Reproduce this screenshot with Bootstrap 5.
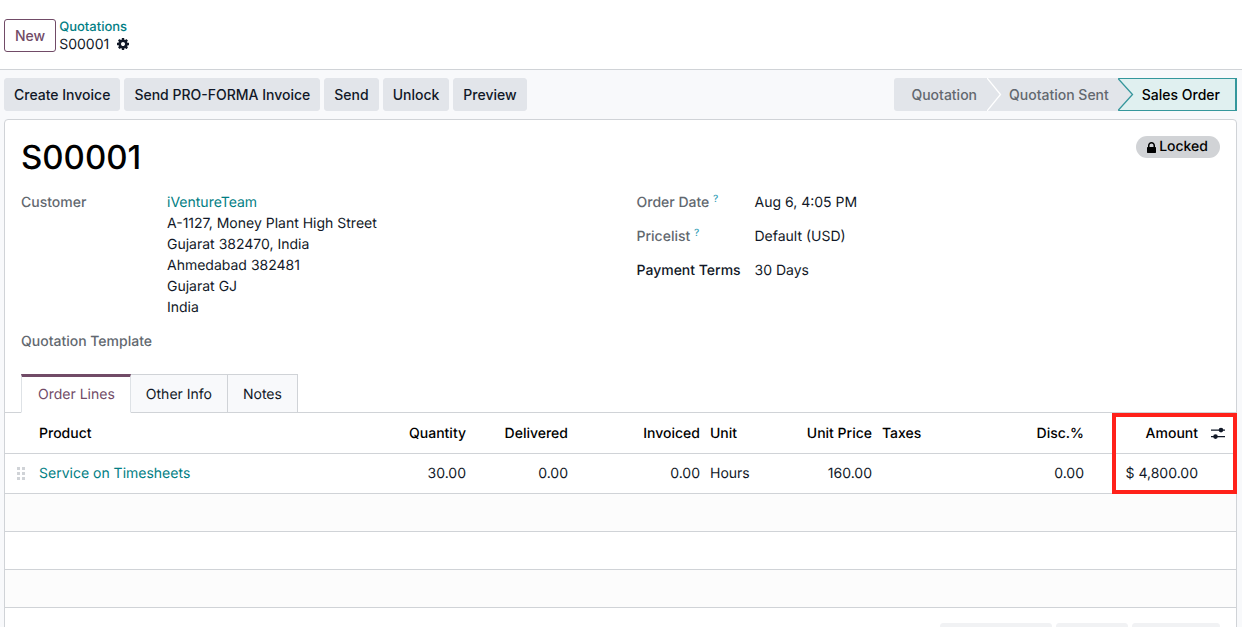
<!DOCTYPE html>
<html lang="en">
<head>
<meta charset="utf-8">
<meta name="viewport" content="width=device-width, initial-scale=1">
<title>S00001 - Quotations</title>
<link href="https://cdn.jsdelivr.net/npm/bootstrap@5.3.0/dist/css/bootstrap.min.css" rel="stylesheet">
<style>
  :root { --ink: #111827; --teal: #017e84; --plum: #714b67; --line: #d0d3d7; --soft: #f8f9fb; --grey: #e2e5ea; --label: #62686f; }
  body { font-family: Inter, "Liberation Sans", sans-serif; font-size: 14px; line-height: 21px; color: var(--ink); background: var(--soft); height: 100vh; overflow: hidden; text-rendering: geometricPrecision; }
  a { color: var(--teal); text-decoration: none; }
  .control-panel { min-height: 70px; padding: 2px 4px 0; gap: 3px; border-bottom: 1px solid var(--line); }
  .crumbs { line-height: 17px; font-size: 14px; }
  .crumbs a { font-size: 13px; font-weight: 500; }
  .btn { --bs-btn-font-size: 14px; --bs-btn-line-height: 21px; --bs-btn-padding-x: 9px; --bs-btn-padding-y: 5px; --bs-btn-border-radius: 3px; --bs-btn-font-weight: 500; }
  .btn-new { --bs-btn-padding-x: 10px; --bs-btn-color: var(--plum); --bs-btn-border-color: var(--plum); --bs-btn-bg: #fff; }
  .btn-grey { --bs-btn-color: var(--ink); --bs-btn-bg: var(--grey); --bs-btn-border-color: var(--grey); }
  .btn-fade { --bs-btn-disabled-bg: #f1f2f4; --bs-btn-disabled-border-color: #f1f2f4; --bs-btn-disabled-opacity: 1; height: 33px; }
  .form-edge { padding-left: 4px; padding-right: 5px; }
  .stage { position: relative; height: 33px; border: 0; background: var(--grey); color: var(--label); font-weight: 500; padding: 0 9px 0 22px; }
  .stage:first-child { padding: 0 10px 0 17px; border-radius: 3px 0 0 3px; }
  .stage-on { background: #e0f0f0; color: #000; padding: 0 15px 0 24px; border: solid #35979c; border-width: 1px 2px 1px 0; }
  .stage svg { position: absolute; left: 0; top: 0; }
  .stage-on svg { top: -1px; }
  .sheet { background: #fff; border: 1px solid var(--line); border-radius: 4px 4px 0 0; }
  .sheet h1 { font-size: 33px; line-height: 42px; font-weight: 500; color: #000; }
  .sheet-head { padding: 16px 16px 14px; }
  .state-pill { background: #d1d3d6; color: #000; font-size: 14px; line-height: 22px; font-weight: 500; padding: 0 12px 0 11px; gap: 3px; }
  .field-label { color: var(--label); font-weight: 500; flex: none; }
  .field-label.required { color: var(--ink); }
  .left-fields { display: grid; row-gap: 13px; }
  .left-fields .field-label { width: 146px; }
  .right-fields .field-label { width: 118px; }
  .right-fields { display: grid; row-gap: 13px; align-content: start; }
  .help { color: #2f9db5; font-size: 10px; line-height: 0; vertical-align: 5px; }
  .nav-tabs { --bs-nav-tabs-border-color: var(--line); --bs-nav-tabs-border-radius: 0; padding-left: 16px; margin-top: 22px; }
  .nav-tabs .nav-link { padding: 9px 15px 7px; line-height: 21px; font-size: 14px; color: var(--ink); background: var(--soft); border: 1px solid var(--line); }
  .nav-tabs .nav-item + .nav-item .nav-link { border-left: 0; }
  .nav-tabs .nav-link.active { color: var(--plum); background: #fff; border-top: 3px solid var(--plum); border-bottom-color: #fff; padding: 7px 15px 7px 16px; }
  .lines { table-layout: fixed; color: var(--ink); margin: 0; border-collapse: separate; border-spacing: 0; }
  .lines > :not(caption) > * > * { padding: 0 5px; border-bottom: 1px solid var(--line); background: transparent; white-space: nowrap; vertical-align: middle; }
  .lines th { height: 41px; color: #000; font-weight: 500; }
  .lines td { height: 40px; }
  .lines tr.blank td { height: 38px; }
  .lines tr.blank:nth-child(even) { background: #fcfcfc; }
  .highlight { position: absolute; top: 0; right: -1px; width: 125px; height: 81px; border: 4px solid #ff211a; pointer-events: none; }
  .totals { padding: 15px 16px; }
  .c-handle { width: 29px; } .c-qty { width: 100px; } .c-del { width: 102px; } .c-inv { width: 132px; }
  .c-unit { width: 90px; } .c-price { width: 82px; } .c-tax { width: 120px; } .c-disc { width: 92px; } .c-amt { width: 114px; } .c-opt { width: 33px; }
  .w-a { width: 112px; } .w-b { width: 72px; } .w-c { width: 88px; }
</style>
</head>
<body>
<header class="control-panel bg-white d-flex align-items-center">
  <button type="button" class="btn btn-new">New</button>
  <nav class="crumbs d-flex flex-column" aria-label="Breadcrumb">
    <a href="#">Quotations</a>
    <span class="d-flex align-items-center gap-2">S00001
      <button type="button" class="border-0 bg-transparent p-0 d-flex" aria-label="Actions">
        <svg width="12" height="12" viewBox="0 128 1536 1536" fill="#111827"><path d="M1024 896q0-106-75-181t-181-75-181 75-75 181 75 181 181 75 181-75 75-181zm512-109v222q0 12-8 23t-20 13l-185 28q-19 54-39 91 35 50 107 138 10 12 10 25t-9 23q-27 37-99 108t-94 71q-12 0-26-9l-138-108q-44 23-91 38-16 136-29 186-7 28-36 28h-222q-14 0-24.500-8.500t-11.500-21.500l-28-184q-49-16-90-37l-141 107q-10 9-25 9-14 0-25-11-126-114-165-168-7-10-7-23 0-12 8-23 15-21 51-66.500t54-70.500q-27-50-41-99l-183-27q-13-2-21-12.500t-8-23.500v-222q0-12 8-23t19-13l186-28q14-46 39-92-40-57-107-138-10-12-10-24 0-10 9-23 26-36 98.500-107.500t94.500-71.500q13 0 26 10l138 107q44-23 91-38 16-136 29-186 7-28 36-28h222q14 0 24.500 8.500t11.500 21.500l28 184q49 16 90 37l142-107q9-9 24-9 13 0 25 10 129 119 165 170 7 8 7 22 0 12-8 23-15 21-51 66.500t-54 70.500q26 50 41 98l183 28q13 2 21 12.500t8 23.500z"/></svg>
      </button>
    </span>
  </nav>
</header>

<main class="form-edge">
  <div class="d-flex justify-content-between py-2">
    <div class="d-flex gap-1">
      <button type="button" class="btn btn-grey">Create Invoice</button>
      <button type="button" class="btn btn-grey">Send PRO-FORMA Invoice</button>
      <button type="button" class="btn btn-grey">Send</button>
      <button type="button" class="btn btn-grey">Unlock</button>
      <button type="button" class="btn btn-grey">Preview</button>
    </div>
    <div class="d-flex" role="group" aria-label="Status">
      <button type="button" class="stage">Quotation</button>
      <button type="button" class="stage">Quotation Sent
        <svg width="16" height="33" fill="none" stroke="#fff" stroke-width="1.300"><path d="M0 0L13.500 16.500L0 33"/></svg>
      </button>
      <button type="button" class="stage stage-on" aria-current="step">Sales Order
        <svg width="16" height="33"><path d="M0 0L14.500 16.500L0 33Z" fill="#e2e5ea"/><path d="M0 .5L14.500 16.500L0 32.500" fill="none" stroke="#35979c" stroke-width="1.300"/></svg>
      </button>
    </div>
  </div>

  <section class="sheet">
    <div class="sheet-head d-flex justify-content-between align-items-start">
      <h1 class="mb-0">S00001</h1>
      <span class="state-pill rounded-pill d-flex align-items-center">
        <svg width="9" height="11" viewBox="0 128 1152 1408"><path d="M320 768h512v-192q0-106-75-181t-181-75-181 75-75 181v192zm832 96v576q0 40-28 68t-68 28h-960q-40 0-68-28t-28-68v-576q0-40 28-68t68-28h32v-192q0-184 132-316t316-132 316 132 132 316v192h32q40 0 68 28t28 68z"/></svg>Locked
      </span>
    </div>
    <div class="row g-0">
      <div class="col-6 px-3 left-fields">
        <div class="d-flex">
          <span class="field-label">Customer</span>
          <div><a href="#">iVentureTeam</a><br>A-1127, Money Plant High Street<br>Gujarat 382470, India<br>Ahmedabad 382481<br>Gujarat GJ<br>India</div>
        </div>
        <div class="d-flex"><span class="field-label">Quotation Template</span></div>
      </div>
      <div class="col-6 px-3 right-fields">
        <div class="d-flex"><span class="field-label">Order Date <a class="help" href="#">?</a></span><span>Aug 6, 4:05 PM</span></div>
        <div class="d-flex"><span class="field-label">Pricelist <a class="help" href="#">?</a></span><span>Default (USD)</span></div>
        <div class="d-flex"><span class="field-label required">Payment Terms</span><span>30 Days</span></div>
      </div>
    </div>

    <ul class="nav nav-tabs">
      <li class="nav-item"><a class="nav-link active" href="#">Order Lines</a></li>
      <li class="nav-item"><a class="nav-link" href="#">Other Info</a></li>
      <li class="nav-item"><a class="nav-link" href="#">Notes</a></li>
    </ul>

    <div class="position-relative">
      <table class="table lines">
        <colgroup><col class="c-handle"><col><col class="c-qty"><col class="c-del"><col class="c-inv"><col class="c-unit"><col class="c-price"><col class="c-tax"><col class="c-disc"><col class="c-amt"><col class="c-opt"></colgroup>
        <thead>
          <tr>
            <th></th><th>Product</th><th class="text-end">Quantity</th><th class="text-end">Delivered</th><th class="text-end">Invoiced</th><th>Unit</th><th class="text-end">Unit Price</th><th>Taxes</th><th class="text-end">Disc.%</th><th class="text-end">Amount</th>
            <th><button type="button" class="border-0 bg-transparent p-0 d-flex" aria-label="Optional columns">
              <svg width="20" height="12" viewBox="-3 0 20 12" fill="#111827"><path d="M0 2.500h14v1.200H0zM0 9h14v1.200H0z"/><circle cx="10" cy="3.100" r="2.300"/><circle cx="4.500" cy="9.600" r="2.300"/></svg></button></th>
          </tr>
        </thead>
        <tbody>
          <tr>
            <td><svg class="d-block ms-auto" width="12" height="14" fill="#d0d3d7"><path d="M0 0h3v3H0zM5 0h3v3H5zM0 5h3v3H0zM5 5h3v3H5zM0 10h3v3H0zM5 10h3v3H5z"/></svg></td>
            <td><a href="#">Service on Timesheets</a></td><td class="text-end">30.00</td><td class="text-end">0.00</td><td class="text-end">0.00</td><td>Hours</td><td class="text-end">160.00</td><td></td><td class="text-end">0.00</td><td class="text-end">$ 4,800.00</td><td></td>
          </tr>
          <tr class="blank"><td colspan="11"></td></tr>
          <tr class="blank"><td colspan="11"></td></tr>
          <tr class="blank"><td colspan="11"></td></tr>
        </tbody>
      </table>
      <div class="highlight"></div>
    </div>

    <div class="totals d-flex justify-content-end gap-1">
      <button type="button" class="btn btn-fade w-a" disabled></button>
      <button type="button" class="btn btn-fade w-b" disabled></button>
      <button type="button" class="btn btn-fade w-c" disabled></button>
    </div>
  </section>
</main>
<script src="https://cdn.jsdelivr.net/npm/bootstrap@5.3.0/dist/js/bootstrap.bundle.min.js"></script>
</body>
</html>
